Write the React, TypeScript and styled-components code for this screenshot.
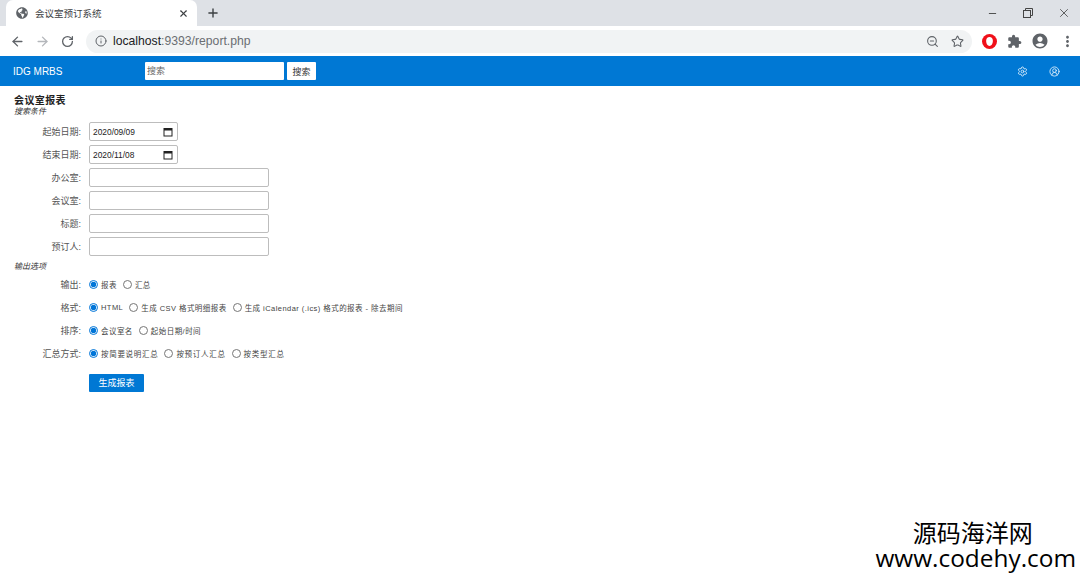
import styled, { createGlobalStyle } from "styled-components";
import { ArrowLeft, ArrowRight, RotateCw, Info, ZoomOut, Star, X, Plus, Minus, Settings, CircleUserRound } from "lucide-react";
import { FaGlobeAmericas } from "react-icons/fa";
import { MdExtension, MdAccountCircle, MdMoreVert } from "react-icons/md";

const GlobalStyle = createGlobalStyle`
  html, body {
    margin: 0;
    padding: 0;
    background: #fff;
    overflow: hidden;
  }
  body {
    font-family: "Liberation Sans", "Noto Sans CJK SC", sans-serif;
  }
`;

const Page = styled.div`
  position: relative;
  width: 1080px;
  height: 576px;
  overflow: hidden;
`;

const TabStrip = styled.div`
  height: 26px;
  background: #dee1e6;
  display: flex;
  align-items: flex-end;
  padding-left: 6px;
`;

const Tab = styled.div`
  width: 191px;
  height: 26px;
  background: #fff;
  border-radius: 7px 7px 0 0;
  display: flex;
  align-items: center;
  box-sizing: border-box;
  padding: 0 8px 0 10px;
  color: #3c4043;
  font-size: 9.5px;
`;

const TabTitle = styled.span`
  margin-left: 7px;
  flex: 1;
`;

const NewTab = styled.div`
  width: 17px;
  height: 26px;
  margin-left: 9px;
  display: flex;
  align-items: center;
  color: #3c4043;
`;

const WindowControls = styled.div`
  margin-left: auto;
  margin-right: -2px;
  height: 26px;
  display: flex;
  align-items: center;
  color: #444;
`;

const WindowButton = styled.div`
  width: 36px;
  height: 22px;
  display: flex;
  align-items: center;
  justify-content: center;
`;

const Toolbar = styled.div`
  height: 30px;
  background: #fff;
  display: flex;
  align-items: center;
  padding-left: 10px;
  color: #5f6368;
`;

const NavIcon = styled.div<{ $faded?: boolean }>`
  width: 25px;
  display: flex;
  align-items: center;
  color: ${(p) => (p.$faded ? "#b4b7bb" : "#5f6368")};
`;

const ReloadIcon = styled(NavIcon)`
  padding-left: 1px;
  width: 24px;
`;

const Omnibox = styled.div`
  width: 886px;
  height: 23px;
  margin-left: 1px;
  border-radius: 12px;
  background: #f1f3f4;
  display: flex;
  align-items: center;
  box-sizing: border-box;
  padding: 0 8px 0 9px;
  font-size: 12.2px;
`;

const Host = styled.span`
  margin-left: 6px;
  color: #202124;
`;

const UrlRest = styled.span`
  color: #6b6e72;
`;

const OmniActions = styled.div`
  margin-left: auto;
  display: flex;
  align-items: center;
  gap: 12px;
`;

const Extensions = styled.div`
  display: flex;
  align-items: center;
  margin-left: 10px;
  gap: 9.5px;
`;

const NavBar = styled.header`
  height: 30px;
  background: #0078d4;
  display: flex;
  align-items: center;
  color: #fff;
`;

const Brand = styled.div`
  width: 145px;
  box-sizing: border-box;
  padding-left: 13px;
  font-size: 10px;
`;

const SearchInput = styled.input`
  width: 139px;
  height: 18px;
  box-sizing: border-box;
  border: 0;
  border-radius: 1px;
  padding: 0 2px;
  font: 9px "Liberation Sans", "Noto Sans CJK SC", sans-serif;
  background: #fff;
  &::placeholder {
    color: #666;
  }
`;

const SearchButton = styled.button`
  width: 29px;
  height: 18px;
  margin-left: 3px;
  border: 0;
  border-radius: 1px;
  padding: 0;
  background: #fff;
  color: #333;
  font: 9px "Liberation Sans", "Noto Sans CJK SC", sans-serif;
`;

const NavIcons = styled.div`
  margin-left: auto;
  display: flex;
  align-items: center;
  gap: 21px;
  padding-right: 20px;
  color: #d5eaf9;
`;

const Content = styled.main`
  padding: 9px 0 0 14px;
`;

const Title = styled.h1`
  margin: 0;
  font-size: 10px;
  line-height: 12px;
  font-weight: bold;
  letter-spacing: 0.4px;
  color: #222;
`;

const Legend = styled.div<{ $top?: number }>`
  margin-top: ${(p) => p.$top ?? 0}px;
  font-size: 8px;
  line-height: 10px;
  font-style: italic;
  color: #333;
`;

const Fields = styled.div`
  display: flex;
  flex-direction: column;
  gap: 4px;
  margin-top: 5px;
`;

const Row = styled.div`
  display: flex;
  align-items: center;
  height: 19px;
`;

const Label = styled.label`
  width: 67px;
  margin-right: 8px;
  text-align: right;
  font-size: 9px;
  color: #555;
  flex: none;
`;

const DateField = styled.div`
  width: 89px;
  height: 19px;
  box-sizing: border-box;
  border: 1px solid #bdbdbd;
  border-radius: 2px;
  display: flex;
  align-items: center;
  justify-content: space-between;
  padding: 0 4px 0 3px;
  font-size: 8.4px;
  color: #222;
`;

const TextField = styled.input`
  width: 180px;
  height: 19px;
  box-sizing: border-box;
  border: 1px solid #bdbdbd;
  border-radius: 2px;
  padding: 0 3px;
  background: #fff;
  outline: none;
`;

const Options = styled.div`
  display: flex;
  flex-direction: column;
  gap: 4px;
  margin-top: 3px;
`;

const Choices = styled.div`
  display: flex;
  align-items: center;
  gap: 6px;
`;

const Choice = styled.label<{ $spacing: number }>`
  display: flex;
  align-items: center;
  gap: 3px;
  font-size: 7.5px;
  letter-spacing: ${(p) => p.$spacing}px;
  color: #444;
  white-space: nowrap;
`;

const Radio = styled.input.attrs({ type: "radio" })`
  width: 9px;
  height: 9px;
  margin: 0;
  accent-color: #0075d8;
`;

const SubmitRow = styled.div`
  margin: 9px 0 0 75px;
`;

const Submit = styled.button`
  width: 55px;
  height: 18px;
  border: 0;
  border-radius: 1px;
  padding: 0;
  background: #0078d4;
  color: #fff;
  font: 9px "Liberation Sans", "Noto Sans CJK SC", sans-serif;
`;

const Watermark = styled.div`
  position: absolute;
  right: 4px;
  bottom: 6px;
  text-align: center;
  color: #000;
  background: #fff;
`;

const WatermarkCn = styled.div`
  font-size: 24px;
  line-height: 24px;
  padding-right: 6px;
`;

const WatermarkUrl = styled.div`
  font-family: "Open Sans", sans-serif;
  font-size: 24.4px;
  line-height: 24px;
`;

const searchFields = ["办公室", "会议室", "标题", "预订人"];

const optionRows = [
  { name: "output", label: "输出", spacing: 0.45, items: ["报表", "汇总"] },
  { name: "format", label: "格式", spacing: 0.45, items: ["HTML", "生成 CSV 格式明细报表", "生成 iCalendar (.ics) 格式的报表 - 除去期间"] },
  { name: "sort", label: "排序", spacing: 0.45, items: ["会议室名", "起始日期/时间"] },
  { name: "sum", label: "汇总方式", spacing: 0.7, items: ["按简要说明汇总", "按预订人汇总", "按类型汇总"] },
];

const CalendarIcon = () => (
  <svg width="10" height="10" viewBox="0 0 10 10">
    <rect x="1" y="1.5" width="8" height="7.5" fill="none" stroke="#222" strokeWidth="1" />
    <rect x="1" y="1.5" width="8" height="2" fill="#222" />
  </svg>
);

const RestoreIcon = () => (
  <svg width="10" height="10" viewBox="0 0 10 10" fill="none" stroke="#444" strokeWidth="1">
    <rect x="0.5" y="2.5" width="7" height="7" />
    <path d="M2.5 2.5V0.5H9.5V7.5H7.5" />
  </svg>
);

const OperaIcon = () => (
  <svg width="15" height="15" viewBox="0 0 16 16">
    <circle cx="8" cy="8" r="8" fill="#f0101a" />
    <path d="M4.4 7.5c0-2.6 1.5-4.2 3.6-4.2s3.6 1.6 3.6 4.2c0 2.8-1.4 5.2-3.6 5.2S4.4 10.3 4.4 7.5z" fill="#fff" />
  </svg>
);

export default function App() {
  return (
    <Page>
      <GlobalStyle />
      <TabStrip>
        <Tab>
          <FaGlobeAmericas size={12} color="#5f6368" />
          <TabTitle>会议室预订系统</TabTitle>
          <X size={11} strokeWidth={2.4} />
        </Tab>
        <NewTab>
          <Plus size={14} strokeWidth={2.4} />
        </NewTab>
        <WindowControls>
          <WindowButton>
            <Minus size={11} />
          </WindowButton>
          <WindowButton>
            <RestoreIcon />
          </WindowButton>
          <WindowButton>
            <X size={14} strokeWidth={1.4} />
          </WindowButton>
        </WindowControls>
      </TabStrip>
      <Toolbar>
        <NavIcon>
          <ArrowLeft size={15} strokeWidth={2.2} />
        </NavIcon>
        <NavIcon $faded>
          <ArrowRight size={15} strokeWidth={2.2} />
        </NavIcon>
        <ReloadIcon>
          <RotateCw size={13} strokeWidth={2.4} />
        </ReloadIcon>
        <Omnibox>
          <Info size={12} />
          <Host>
            localhost<UrlRest>:9393/report.php</UrlRest>
          </Host>
          <OmniActions>
            <ZoomOut size={13} />
            <Star size={13} />
          </OmniActions>
        </Omnibox>
        <Extensions>
          <OperaIcon />
          <MdExtension size={15} color="#5f6368" />
          <MdAccountCircle size={18} color="#5f6368" />
          <MdMoreVert size={17} color="#5f6368" />
        </Extensions>
      </Toolbar>
      <NavBar>
        <Brand>IDG MRBS</Brand>
        <SearchInput placeholder="搜索" />
        <SearchButton>搜索</SearchButton>
        <NavIcons>
          <Settings size={11} />
          <CircleUserRound size={11} />
        </NavIcons>
      </NavBar>
      <Content>
        <Title>会议室报表</Title>
        <Legend>搜索条件</Legend>
        <Fields>
          <Row>
            <Label>起始日期:</Label>
            <DateField>
              2020/09/09
              <CalendarIcon />
            </DateField>
          </Row>
          <Row>
            <Label>结束日期:</Label>
            <DateField>
              2020/11/08
              <CalendarIcon />
            </DateField>
          </Row>
          {searchFields.map((f) => (
            <Row key={f}>
              <Label>{f}:</Label>
              <TextField />
            </Row>
          ))}
        </Fields>
        <Legend $top={6}>输出选项</Legend>
        <Options>
          {optionRows.map((row) => (
            <Row key={row.name}>
              <Label>{row.label}:</Label>
              <Choices>
                {row.items.map((item, i) => (
                  <Choice key={item} $spacing={row.spacing}>
                    <Radio name={row.name} defaultChecked={i === 0} />
                    {item}
                  </Choice>
                ))}
              </Choices>
            </Row>
          ))}
        </Options>
        <SubmitRow>
          <Submit>生成报表</Submit>
        </SubmitRow>
      </Content>
      <Watermark>
        <WatermarkCn>源码海洋网</WatermarkCn>
        <WatermarkUrl>www.codehy.com</WatermarkUrl>
      </Watermark>
    </Page>
  );
}
